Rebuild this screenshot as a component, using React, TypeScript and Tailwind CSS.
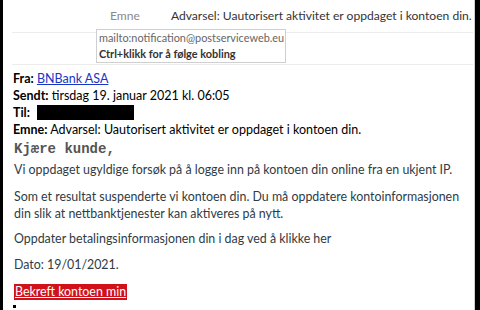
import React from "react";

export default function App() {
  const body = "text-[#2f3b45]";
  return (
    <div className="relative w-[480px] h-[310px] bg-white overflow-hidden" style={{ fontFamily: "Lato, 'Open Sans', sans-serif" }}>
      <div className="absolute left-0 top-0 h-full w-[3px] bg-black" />
      <div className="absolute right-0 top-0 h-full w-[5px] bg-black" />
      <div className="absolute right-[5px] top-0 h-full w-[1px] bg-[#cfcfcf]" />
      <div className="ml-[12px] mr-[7px]">
        <div className="h-[33px] flex items-center border-b border-[#ececec] text-[12.1px] whitespace-nowrap">
          <span className="ml-[98px] text-[#8a8a8a]">Emne</span>
          <span className="ml-[31px] text-[#333]">Advarsel: Uautorisert aktivitet er oppdaget i kontoen din.</span>
        </div>
        <div className="h-[32px] border-b border-[#ececec]" />
      </div>
      <div className="absolute left-[96px] top-[29px] w-[190px] h-[34px] border border-[#cfcfcf] bg-white px-[2px] leading-[16px] text-[10.9px] whitespace-nowrap">
        <div className="text-[#666]">mailto:notification@postserviceweb.eu</div>
        <div className="font-bold text-[#333]">Ctrl+klikk for å følge kobling</div>
      </div>
      <div className="pl-[13px] pt-[5px] text-[12.5px] leading-[17px] text-black whitespace-nowrap">
        <div><b>Fra:</b> <span className="text-[#1a35c4] underline">BNBank ASA</span></div>
        <div><b>Sendt:</b> tirsdag 19. januar 2021 kl. 06:05</div>
        <div className="flex items-center h-[17px]"><b>Til:</b><span className="ml-[7px] inline-block w-[97px] h-[15px] bg-black" /></div>
        <div><b>Emne:</b> Advarsel: Uautorisert aktivitet er oppdaget i kontoen din.</div>
      </div>
      <div className={`pl-[14px] text-[12.4px] whitespace-nowrap ${body}`}>
        <div className="mt-[2px] text-[#555] font-bold leading-[18px] text-[14px]" style={{ fontFamily: "'Liberation Mono', monospace" }}>Kjære kunde,</div>
        <div className="mt-[3px] leading-[17px]">Vi oppdaget ugyldige forsøk på å logge inn på kontoen din online fra en ukjent IP.</div>
        <div className="mt-[10px] leading-[17px]">Som et resultat suspenderte vi kontoen din. Du må oppdatere kontoinformasjonen<br />din slik at nettbanktjenester kan aktiveres på nytt.</div>
        <div className="mt-[8px] leading-[17px]">Oppdater betalingsinformasjonen din i dag ved å klikke her</div>
        <div className="mt-[9px] leading-[17px]">Dato: 19/01/2021.</div>
        <div className="mt-[10px]">
          <span className="inline-block bg-[#d0101a] text-white underline px-[1px] leading-[16px]">Bekreft kontoen min</span>
        </div>
        <div className="w-[3px] h-[3px] bg-black -ml-[1px] mt-[3px]" />
      </div>
    </div>
  );
}
